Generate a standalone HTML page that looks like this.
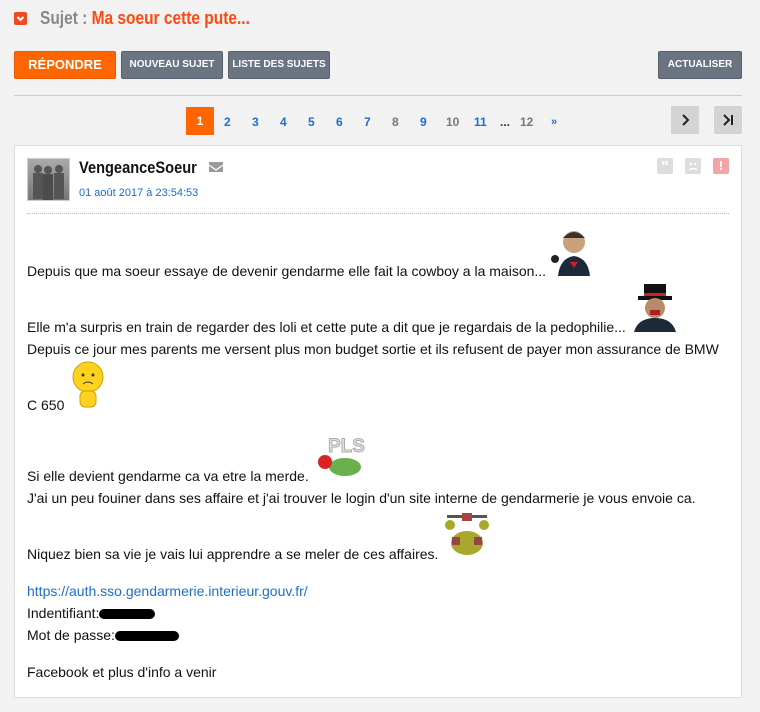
<!DOCTYPE html>
<html><head><meta charset="utf-8"><style>
*{margin:0;padding:0;box-sizing:border-box}
body{width:760px;height:712px;background:#f2f2f2;font-family:"Liberation Sans",Arial,sans-serif;position:relative;overflow:hidden}
.a{position:absolute}
.btn{position:absolute;color:#fff;font-weight:bold;text-align:center;border-radius:2px}
.g{background:#6b7581;border:1px solid #59626c;font-size:10px;line-height:26px;height:28px}
.pg{position:absolute;top:112px;font-size:12px;font-weight:bold;color:#1b6ed1;line-height:20px}
.t{position:absolute;left:27px;font-size:14px;color:#111;white-space:nowrap;line-height:16px}
.n{transform-origin:0 0;transform:scaleX(0.86);white-space:nowrap}
</style></head><body>
<div class="a" style="left:14px;top:12px;width:13px;height:13px;background:#f04a1f;border-radius:2px"><svg width="13" height="13"><path d="M3.5 5 L6.5 8 L9.5 5" stroke="#fff" stroke-width="2" fill="none"/></svg></div>
<div class="a n" style="left:40px;top:8px;font-size:18px;font-weight:bold;color:#888">Sujet : <span style="color:#fa4b12">Ma soeur cette pute...</span></div>
<div class="btn" style="left:14px;top:51px;width:102px;height:28px;background:#ff6600;border:1px solid #e85c00;font-size:13px;line-height:26px">RÉPONDRE</div>
<div class="btn g" style="left:121px;top:51px;width:102px">NOUVEAU SUJET</div>
<div class="btn g" style="left:228px;top:51px;width:102px">LISTE DES SUJETS</div>
<div class="btn g" style="left:658px;top:51px;width:84px">ACTUALISER</div>
<div class="a" style="left:14px;top:95px;width:728px;height:1px;background:#ccc"></div>
<div class="a" style="left:186px;top:107px;width:28px;height:28px;background:#ff6600;color:#fff;font-weight:bold;font-size:12px;text-align:center;line-height:28px">1</div>
<div class="pg" style="left:224px">2</div><div class="pg" style="left:252px">3</div><div class="pg" style="left:280px">4</div><div class="pg" style="left:308px">5</div><div class="pg" style="left:336px">6</div><div class="pg" style="left:364px">7</div>
<div class="pg" style="left:392px;color:#777">8</div><div class="pg" style="left:420px">9</div><div class="pg" style="left:446px;color:#777">10</div><div class="pg" style="left:474px">11</div><div class="pg" style="left:500px;color:#333">...</div><div class="pg" style="left:520px;color:#777">12</div><div class="pg" style="left:551px;font-size:11px">»</div>
<div class="a" style="left:671px;top:106px;width:28px;height:28px;background:#d4d4d4"><svg width="28" height="28"><path d="M12 9 L17 14 L12 19" stroke="#222" stroke-width="2" fill="none"/></svg></div>
<div class="a" style="left:714px;top:106px;width:28px;height:28px;background:#d4d4d4"><svg width="28" height="28"><path d="M10 9 L15 14 L10 19" stroke="#222" stroke-width="2" fill="none"/><path d="M18 9 V19" stroke="#222" stroke-width="2"/></svg></div>
<div class="a" style="left:14px;top:145px;width:728px;height:553px;background:#fff;border:1px solid #ddd"></div>
<div class="a" style="left:27px;top:158px;width:43px;height:43px;border:1px solid #ccc;background:linear-gradient(180deg,#aaa,#777)">
<svg width="41" height="41"><circle cx="10" cy="10" r="4" fill="#555"/><circle cx="20" cy="11" r="4" fill="#555"/><circle cx="31" cy="10" r="4" fill="#555"/><rect x="5" y="14" width="10" height="26" fill="#555"/><rect x="15" y="15" width="10" height="26" fill="#4c4c4c"/><rect x="26" y="14" width="10" height="26" fill="#555"/></svg></div>
<div class="a n" style="left:79px;top:158px;font-size:17px;font-weight:bold;color:#111">VengeanceSoeur</div>
<div class="a" style="left:209px;top:162px;width:14px;height:10px;background:#999"><svg width="14" height="10"><path d="M0 0 L7 5 L14 0" stroke="#fff" stroke-width="1.3" fill="none"/></svg></div>
<div class="a" style="left:79px;top:187px;font-size:11px;color:#1b6ed1">01 août 2017 à 23:54:53</div>
<div class="a" style="left:657px;top:158px;width:16px;height:16px;background:#ddd;border-radius:2px;color:#fff;font-weight:bold;font-size:16px;line-height:20px;text-align:center">"</div>
<div class="a" style="left:685px;top:158px;width:16px;height:16px;background:#ddd;border-radius:2px"><svg width="16" height="16"><rect x="5" y="5" width="2" height="2" fill="#fff"/><rect x="9" y="5" width="2" height="2" fill="#fff"/><path d="M4 12 Q8 9 12 12" stroke="#fff" stroke-width="1.5" fill="none"/></svg></div>
<div class="a" style="left:713px;top:158px;width:16px;height:16px;background:#f2a5a5;border-radius:2px;color:#fff;font-weight:bold;font-size:13px;line-height:16px;text-align:center">!</div>
<div class="a" style="left:27px;top:213px;width:702px;border-top:1px dotted #bbb"></div>
<div class="t" style="top:263px">Depuis que ma soeur essaye de devenir gendarme elle fait la cowboy a la maison...</div>
<div class="a" style="left:550px;top:226px;width:48px;height:50px"><svg width="48" height="50"><circle cx="24" cy="16" r="11" fill="#c9a27a"/><path d="M13 12 Q24 0 35 12" fill="#333"/><path d="M8 50 Q10 32 24 30 Q38 32 40 50Z" fill="#1a2a3a"/><path d="M20 36 L28 36 L24 42Z" fill="#c22"/><circle cx="5" cy="33" r="4" fill="#222"/></svg></div>
<div class="t" style="top:319px">Elle m'a surpris en train de regarder des loli et cette pute a dit que je regardais de la pedophilie...</div>
<div class="a" style="left:630px;top:282px;width:50px;height:50px"><svg width="50" height="50"><rect x="14" y="2" width="22" height="14" fill="#111"/><rect x="8" y="14" width="34" height="4" fill="#111"/><rect x="14" y="11" width="22" height="3" fill="#c22"/><circle cx="25" cy="26" r="10" fill="#b88a6a"/><path d="M20 28 h10 v5 h-10z" fill="#a22"/><path d="M4 50 Q8 36 25 36 Q42 36 46 50Z" fill="#1a2a3a"/></svg></div>
<div class="t" style="top:341px">Depuis ce jour mes parents me versent plus mon budget sortie et ils refusent de payer mon assurance de BMW</div>
<div class="a" style="left:71px;top:360px;width:34px;height:50px"><svg width="34" height="50"><circle cx="17" cy="17" r="15" fill="#ffd21f" stroke="#c9a200"/><circle cx="12" cy="15" r="1.5" fill="#333"/><circle cx="22" cy="15" r="1.5" fill="#333"/><path d="M12 24 Q17 20 22 24" stroke="#333" fill="none"/><rect x="9" y="31" width="16" height="16" rx="5" fill="#ffd21f" stroke="#c9a200"/></svg></div>
<div class="t" style="top:397px">C 650</div>
<div class="t" style="top:468px">Si elle devient gendarme ca va etre la merde.</div>
<div class="a" style="left:313px;top:430px;width:52px;height:50px"><svg width="52" height="50"><text x="15" y="22" font-family="Liberation Sans" font-weight="bold" font-size="19" fill="#ddd" stroke="#999" stroke-width="0.7">PLS</text><ellipse cx="32" cy="37" rx="16" ry="9" fill="#6ab04c"/><circle cx="12" cy="32" r="7" fill="#d22"/></svg></div>
<div class="t" style="top:490px">J'ai un peu fouiner dans ses affaire et j'ai trouver le login d'un site interne de gendarmerie je vous envoie ca.</div>
<div class="t" style="top:546px">Niquez bien sa vie je vais lui apprendre a se meler de ces affaires.</div>
<div class="a" style="left:442px;top:513px;width:50px;height:45px"><svg width="50" height="45"><rect x="5" y="2" width="40" height="3" fill="#555"/><rect x="20" y="0" width="10" height="8" fill="#a44"/><ellipse cx="25" cy="30" rx="16" ry="12" fill="#a8a82a"/><circle cx="8" cy="12" r="5" fill="#a8a82a"/><circle cx="42" cy="12" r="5" fill="#a8a82a"/><rect x="10" y="24" width="8" height="8" fill="#944"/><rect x="32" y="24" width="8" height="8" fill="#944"/></svg></div>
<div class="t" style="top:583px;color:#1b6ed1">https://auth.sso.gendarmerie.interieur.gouv.fr/</div>
<div class="t" style="top:605px">Indentifiant:<span style="display:inline-block;width:56px;height:10px;background:#000;border-radius:5px;vertical-align:-1px"></span></div>
<div class="t" style="top:627px">Mot de passe:<span style="display:inline-block;width:64px;height:10px;background:#000;border-radius:5px;vertical-align:-1px"></span></div>
<div class="t" style="top:664px">Facebook et plus d'info a venir</div>
</body></html>
